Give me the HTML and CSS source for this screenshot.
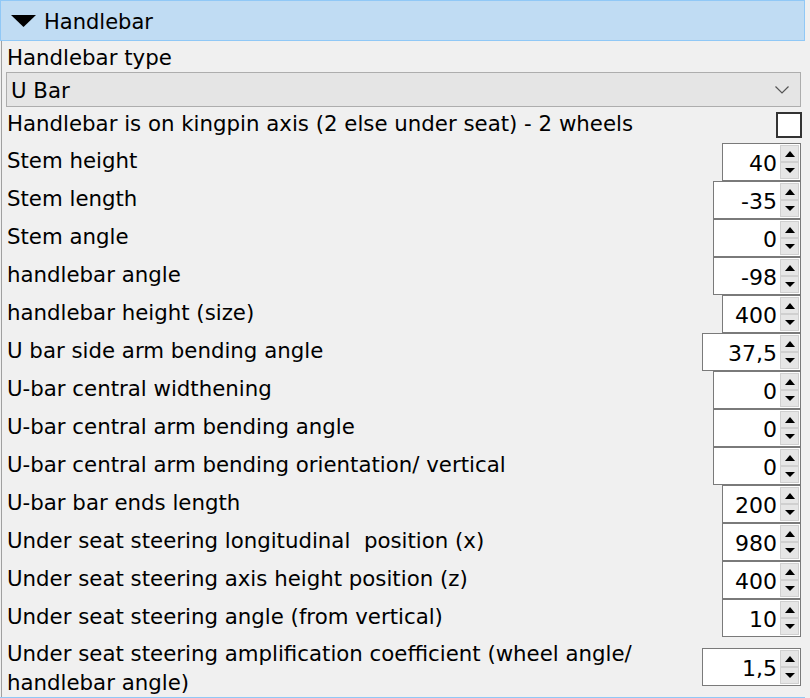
FILE: index.html
```html
<!DOCTYPE html>
<html>
<head>
<meta charset="utf-8">
<link rel="stylesheet" href="styles.css">
</head>
<body>
<div class="panel">
  <div class="section-header">
    <svg class="caret" width="25" height="12" viewBox="0 0 25 12"><polygon points="0,0 25,0 12.5,12" fill="#000"/></svg>
    <span>Handlebar</span>
  </div>
  <div class="content">
    <div class="label-row">Handlebar type</div>
    <div class="combo">
      <span>U Bar</span>
      <svg class="chev" width="14" height="8" viewBox="0 0 14 8"><polyline points="0.5,0.5 7,7 13.5,0.5" fill="none" stroke="#555" stroke-width="1.2"/></svg>
    </div>
    <div class="check-row">
      <span class="lbl">Handlebar is on kingpin axis (2 else under seat) - 2 wheels</span>
      <span class="checkbox"></span>
    </div>

    <div class="row"><span class="lbl">Stem height</span><div class="spin w2"><span class="val">40</span><div class="btns"><div class="up"></div><div class="down"></div></div></div></div>
    <div class="row"><span class="lbl">Stem length</span><div class="spin w3"><span class="val">-35</span><div class="btns"><div class="up"></div><div class="down"></div></div></div></div>
    <div class="row"><span class="lbl">Stem angle</span><div class="spin w3"><span class="val">0</span><div class="btns"><div class="up"></div><div class="down"></div></div></div></div>
    <div class="row"><span class="lbl">handlebar angle</span><div class="spin w3"><span class="val">-98</span><div class="btns"><div class="up"></div><div class="down"></div></div></div></div>
    <div class="row"><span class="lbl">handlebar height (size)</span><div class="spin w2"><span class="val">400</span><div class="btns"><div class="up"></div><div class="down"></div></div></div></div>
    <div class="row"><span class="lbl">U bar side arm bending angle</span><div class="spin w4"><span class="val">37,5</span><div class="btns"><div class="up"></div><div class="down"></div></div></div></div>
    <div class="row"><span class="lbl">U-bar central widthening</span><div class="spin w3"><span class="val">0</span><div class="btns"><div class="up"></div><div class="down"></div></div></div></div>
    <div class="row"><span class="lbl">U-bar central arm bending angle</span><div class="spin w3"><span class="val">0</span><div class="btns"><div class="up"></div><div class="down"></div></div></div></div>
    <div class="row"><span class="lbl">U-bar central arm bending orientation/ vertical</span><div class="spin w3"><span class="val">0</span><div class="btns"><div class="up"></div><div class="down"></div></div></div></div>
    <div class="row"><span class="lbl">U-bar bar ends length</span><div class="spin w2"><span class="val">200</span><div class="btns"><div class="up"></div><div class="down"></div></div></div></div>
    <div class="row"><span class="lbl">Under seat steering longitudinal&nbsp; position (x)</span><div class="spin w2"><span class="val">980</span><div class="btns"><div class="up"></div><div class="down"></div></div></div></div>
    <div class="row"><span class="lbl">Under seat steering axis height position (z)</span><div class="spin w2"><span class="val">400</span><div class="btns"><div class="up"></div><div class="down"></div></div></div></div>
    <div class="row"><span class="lbl">Under seat steering angle (from vertical)</span><div class="spin w2"><span class="val">10</span><div class="btns"><div class="up"></div><div class="down"></div></div></div></div>
    <div class="row tall"><span class="lbl">Under seat steering amplification coefficient (wheel angle/<br>handlebar angle)</span><div class="spin w4"><span class="val">1,5</span><div class="btns"><div class="up"></div><div class="down"></div></div></div></div>
  </div>
  <div class="next-header"></div>
</div>
</body>
</html>
```

FILE: styles.css
```css
html, body {
  margin: 0;
  padding: 0;
  background: #f0f0f0;
  overflow: hidden;
}

body {
  width: 810px;
  height: 698px;
  font-family: "DejaVu Sans", Tahoma, sans-serif;
  font-size: 21.3px;
  color: #000;
}

.panel {
  width: 805px;
  display: flex;
  flex-direction: column;
}

.section-header {
  height: 39px;
  background: #c0dcf3;
  border: 1px solid #90c8f6;
  display: flex;
  align-items: center;
  box-sizing: content-box;
}

.section-header .caret {
  margin-left: 10px;
  margin-right: 8px;
  margin-top: 1px;
}

.section-header span {
  font-size: 21px;
  line-height: 1;
  margin-top: 4px;
}

.content {
  border-left: 1px solid #a0a0a0;
  margin-left: 1px;
  display: flex;
  flex-direction: column;
}

.label-row {
  height: 31px;
  line-height: 33px;
  padding-left: 5px;
}

.combo {
  height: 33px;
  margin-left: 4px;
  width: 789px;
  background: #e5e5e5;
  border: 1px solid #adadad;
  display: flex;
  align-items: center;
  justify-content: space-between;
  padding-left: 4px;
  box-sizing: content-box;
}

.combo span {
  margin-top: 2px;
}

.combo .chev {
  margin-right: 11px;
}

.check-row {
  height: 36px;
  display: flex;
  align-items: center;
  justify-content: space-between;
  padding-left: 5px;
}

.check-row .lbl {
  margin-top: -4px;
}

.checkbox {
  width: 22px;
  height: 22px;
  border: 2px solid #333;
  background: #fff;
  margin-right: 3px;
}

.row {
  height: 38px;
  display: flex;
  align-items: center;
  justify-content: space-between;
  padding-left: 5px;
}

.row .lbl {
  line-height: 29px;
  margin-top: -3px;
}

.row.tall {
  height: 60px;
}

.row.tall .lbl {
  margin-top: 2px;
}

.spin {
  height: 36px;
  border: 1px solid #7a7a7a;
  background: #fff;
  display: flex;
  align-items: stretch;
  margin-right: 4px;
  box-sizing: content-box;
}

.spin.w2 { width: 77px; }
.spin.w3 { width: 86px; }
.spin.w4 { width: 97px; }

.spin .val {
  flex: 1;
  text-align: right;
  line-height: 40px;
  padding-right: 3px;
  font-size: 22px;
}

.spin .btns {
  width: 19px;
  display: flex;
  flex-direction: column;
  margin: 1px 1px 1px 0;
}

.spin .up, .spin .down {
  flex: 1;
  background: #e6e6e6;
  border: 1px solid #d0d0d0;
  display: flex;
  align-items: center;
  justify-content: center;
}

.spin .up::after {
  content: "";
  border-left: 5px solid transparent;
  border-right: 5px solid transparent;
  border-bottom: 6px solid #000;
}

.spin .down::after {
  content: "";
  border-left: 5px solid transparent;
  border-right: 5px solid transparent;
  border-top: 5px solid #000;
}

.next-header {
  height: 4px;
  background: #c0dcf3;
  border-top: 1px solid #90c8f6;
}
```
